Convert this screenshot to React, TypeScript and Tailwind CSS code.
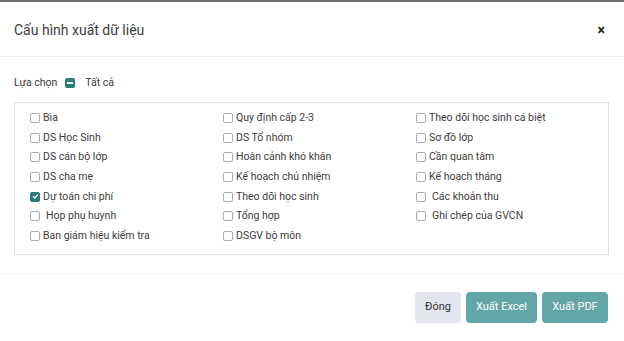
import React, { useState } from 'react';

const columns: { label: string; spaced?: boolean }[][] = [
  [
    { label: 'Bìa' },
    { label: 'DS Học Sinh' },
    { label: 'DS cán bộ lớp' },
    { label: 'DS cha mẹ' },
    { label: 'Dự toán chi phí' },
    { label: 'Họp phụ huynh', spaced: true },
    { label: 'Ban giám hiệu kiểm tra' },
  ],
  [
    { label: 'Quy định cấp 2-3' },
    { label: 'DS Tổ nhóm' },
    { label: 'Hoàn cảnh khó khăn' },
    { label: 'Kế hoạch chủ nhiệm' },
    { label: 'Theo dõi học sinh' },
    { label: 'Tổng hợp' },
    { label: 'DSGV bộ môn' },
  ],
  [
    { label: 'Theo dõi học sinh cá biệt' },
    { label: 'Sơ đồ lớp' },
    { label: 'Cần quan tâm' },
    { label: 'Kế hoạch tháng' },
    { label: 'Các khoản thu', spaced: true },
    { label: 'Ghi chép của GVCN', spaced: true },
  ],
];

function Box({ checked, onClick }: { checked: boolean; onClick: () => void }) {
  return (
    <span
      onClick={onClick}
      className={`w-[10px] h-[10px] rounded-[2px] border flex items-center justify-center shrink-0 cursor-pointer ${
        checked ? 'bg-[#2a7b79] border-[#2a7b79]' : 'bg-white border-[#a9adb3]'
      }`}
    >
      {checked && (
        <svg className="w-[7px] h-[7px]" viewBox="0 0 10 10" fill="none">
          <path d="M2 5.2l2 2 4-4.4" stroke="white" strokeWidth={1.8} strokeLinecap="round" strokeLinejoin="round" />
        </svg>
      )}
    </span>
  );
}

export default function App() {
  const [checked, setChecked] = useState<Record<string, boolean>>({ 'Dự toán chi phí': true });

  const toggle = (label: string) => setChecked((c) => ({ ...c, [label]: !c[label] }));

  return (
    <div className="w-[624px] h-[341px] bg-white flex flex-col text-[#333] font-['Roboto','Liberation_Sans',sans-serif]">
      <div className="h-[2px] bg-[#6e6e6e] shrink-0" />

      {/* Header */}
      <div className="h-[55px] flex items-center justify-between pl-[14px] pr-[19px] border-b border-[#eceef2]">
        <span className="text-[14px] text-[#3d3d3d] pt-[2px]">Cấu hình xuất dữ liệu</span>
        <button className="text-[14px] font-bold leading-none text-[#222] pt-[2px]">×</button>
      </div>

      {/* Body */}
      <div className="px-[14px] pr-[15px] pt-[18px] pb-[18px] border-b border-[#eef0f4]">
        <div className="flex items-center h-[16px] text-[10.5px] text-[#3a3a3a]">
          <span>Lựa chọn</span>
          <span className="ml-[8px] w-[10px] h-[10px] rounded-[2px] bg-[#2a7b79] flex items-center justify-center">
            <span className="w-[6px] h-[2px] bg-white" />
          </span>
          <span className="ml-[10px]">Tất cả</span>
        </div>

        <div className="mt-[11px] h-[153px] border border-[#dedfe2] pl-[15px] pt-[5px] grid grid-cols-[193px_193px_193px]">
          {columns.map((col, i) => (
            <div key={i} className="flex flex-col">
              {col.map((item) => (
                <label key={item.label} className="h-[19.7px] flex items-center text-[10.5px] text-[#3c3c3c]">
                  <Box checked={!!checked[item.label]} onClick={() => toggle(item.label)} />
                  <span className={item.spaced ? 'ml-[6px]' : 'ml-[3px]'}>{item.label}</span>
                </label>
              ))}
            </div>
          ))}
        </div>
      </div>

      {/* Footer */}
      <div className="flex justify-end gap-[5px] pr-[16px] pt-[18px]">
        <button className="h-[31px] w-[46px] rounded-[4px] bg-[#e3e5ef] text-[11px] text-[#333]">Đóng</button>
        <button className="h-[31px] w-[71px] rounded-[4px] bg-[#63a6a7] text-[11px] text-white">Xuất Excel</button>
        <button className="h-[31px] w-[66px] rounded-[4px] bg-[#63a6a7] text-[11px] text-white">Xuất PDF</button>
      </div>
    </div>
  );
}
